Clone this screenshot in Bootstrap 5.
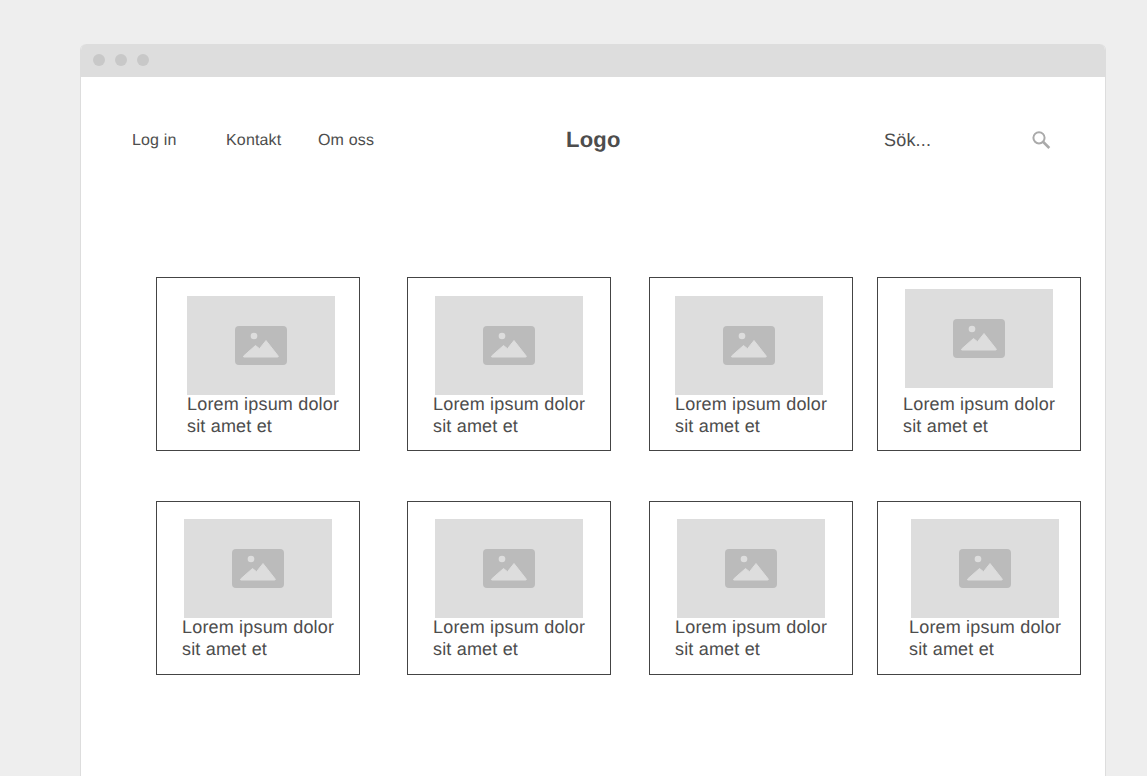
<!DOCTYPE html>
<html lang="sv">
<head>
<meta charset="utf-8">
<title>Wireframe</title>
<link rel="stylesheet" href="https://cdn.jsdelivr.net/npm/bootstrap@5.3.0/dist/css/bootstrap.min.css">
<style>
html,body{height:776px;overflow:hidden}
body{background:#eee;font-family:"Liberation Sans",Arial,sans-serif;color:#4d4d4d;text-rendering:geometricPrecision}
.stage{padding:44px 41px 0 80px;height:776px}
.frame{width:1026px;height:732px;background:#fff;border-radius:6px 6px 0 0;overflow:hidden;border:solid #ddd;border-width:0 1px}
.chrome{height:33px;background:#ddd;margin:0 -1px;padding:0 0 2px 13px;gap:10px}
.dot{width:12px;height:12px;border-radius:50%;background:#c8c8c8}
.topbar{height:126px;padding:0 0 0 51px}
.navlink{font-size:16px;color:#4d4d4d;text-decoration:none;line-height:22px;letter-spacing:.16px;margin-top:2px}
.nl-1{width:94px}.nl-2{width:92px}.nl-3{width:248px}
.logoword{font-size:22px;font-weight:700;width:318px;line-height:26px;letter-spacing:.2px}
.searchword{font-size:18px;width:147px;line-height:22px;letter-spacing:.2px}
.wall{padding:74px 0 0 75px;gap:50px}
.tile{width:204px;height:174px;border:1px solid #444;border-radius:0;background:#fff;padding-top:18px;color:#4d4d4d}
.row-low .tile{padding-top:17px}
.gap-a{margin-left:47px}.gap-b{margin-left:38px}.gap-c{margin-left:24px}
.pic{width:148px;height:99px;background:#ddd}
.pic svg{display:block}
.pic .peak{fill:#ddd;stroke:#ddd;stroke-width:1;stroke-linejoin:round}
.up{margin-top:-7px;margin-bottom:7px}
.i30{margin-left:30px}.i27{margin-left:27px}.i25{margin-left:25px}.i33{margin-left:33px}
.t30{margin-left:30px}.t25{margin-left:25px}.t31{margin-left:31px}
.caption{font-size:18px;letter-spacing:.18px;line-height:22px;margin-top:-2px;white-space:nowrap}
</style>
</head>
<body>
<div class="stage">
<div class="frame">
  <div class="chrome d-flex align-items-center"><span class="dot"></span><span class="dot"></span><span class="dot"></span></div>
  <div class="topbar d-flex align-items-center">
    <a class="navlink nl-1" href="#">Log in</a>
    <a class="navlink nl-2" href="#">Kontakt</a>
    <a class="navlink nl-3" href="#">Om oss</a>
    <div class="logoword">Logo</div>
    <div class="searchword">Sök...</div>
    <svg width="20" height="20" viewBox="0 0 20 20" fill="none" stroke="#aaa" aria-hidden="true"><circle cx="8" cy="7.800" r="5.600" stroke-width="2"/><path d="M12.300 12l6 6" stroke-width="2.600"/></svg>
  </div>
  <div class="wall d-flex flex-column">
    <div class="d-flex">
      <div class="card tile"><div class="pic i30 d-flex align-items-center justify-content-center"><svg width="52" height="40" viewBox="0 0 52 40"><rect width="52" height="39" rx="4" fill="#bbb"/><circle cx="19" cy="10" r="3.3" fill="#ddd"/><path class="peak" d="M9 31q-1 0-.4-1L20.500 19.500l4 3.200L31 14.500 43.200 30q.4 1-.5 1z"/></svg></div><div class="caption t30">Lorem ipsum dolor<br>sit amet et</div></div>
      <div class="card tile gap-a"><div class="pic i27 d-flex align-items-center justify-content-center"><svg width="52" height="40" viewBox="0 0 52 40"><rect width="52" height="39" rx="4" fill="#bbb"/><circle cx="19" cy="10" r="3.3" fill="#ddd"/><path class="peak" d="M9 31q-1 0-.4-1L20.500 19.500l4 3.200L31 14.500 43.200 30q.4 1-.5 1z"/></svg></div><div class="caption t25">Lorem ipsum dolor<br>sit amet et</div></div>
      <div class="card tile gap-b"><div class="pic i25 d-flex align-items-center justify-content-center"><svg width="52" height="40" viewBox="0 0 52 40"><rect width="52" height="39" rx="4" fill="#bbb"/><circle cx="19" cy="10" r="3.3" fill="#ddd"/><path class="peak" d="M9 31q-1 0-.4-1L20.500 19.500l4 3.200L31 14.500 43.200 30q.4 1-.5 1z"/></svg></div><div class="caption t25">Lorem ipsum dolor<br>sit amet et</div></div>
      <div class="card tile gap-c"><div class="pic i27 up d-flex align-items-center justify-content-center"><svg width="52" height="40" viewBox="0 0 52 40"><rect width="52" height="39" rx="4" fill="#bbb"/><circle cx="19" cy="10" r="3.3" fill="#ddd"/><path class="peak" d="M9 31q-1 0-.4-1L20.500 19.500l4 3.200L31 14.500 43.200 30q.4 1-.5 1z"/></svg></div><div class="caption t25">Lorem ipsum dolor<br>sit amet et</div></div>
    </div>
    <div class="d-flex row-low">
      <div class="card tile"><div class="pic i27 d-flex align-items-center justify-content-center"><svg width="52" height="40" viewBox="0 0 52 40"><rect width="52" height="39" rx="4" fill="#bbb"/><circle cx="19" cy="10" r="3.3" fill="#ddd"/><path class="peak" d="M9 31q-1 0-.4-1L20.500 19.500l4 3.200L31 14.500 43.200 30q.4 1-.5 1z"/></svg></div><div class="caption t25">Lorem ipsum dolor<br>sit amet et</div></div>
      <div class="card tile gap-a"><div class="pic i27 d-flex align-items-center justify-content-center"><svg width="52" height="40" viewBox="0 0 52 40"><rect width="52" height="39" rx="4" fill="#bbb"/><circle cx="19" cy="10" r="3.3" fill="#ddd"/><path class="peak" d="M9 31q-1 0-.4-1L20.500 19.500l4 3.200L31 14.500 43.200 30q.4 1-.5 1z"/></svg></div><div class="caption t25">Lorem ipsum dolor<br>sit amet et</div></div>
      <div class="card tile gap-b"><div class="pic i27 d-flex align-items-center justify-content-center"><svg width="52" height="40" viewBox="0 0 52 40"><rect width="52" height="39" rx="4" fill="#bbb"/><circle cx="19" cy="10" r="3.3" fill="#ddd"/><path class="peak" d="M9 31q-1 0-.4-1L20.500 19.500l4 3.200L31 14.500 43.200 30q.4 1-.5 1z"/></svg></div><div class="caption t25">Lorem ipsum dolor<br>sit amet et</div></div>
      <div class="card tile gap-c"><div class="pic i33 d-flex align-items-center justify-content-center"><svg width="52" height="40" viewBox="0 0 52 40"><rect width="52" height="39" rx="4" fill="#bbb"/><circle cx="19" cy="10" r="3.3" fill="#ddd"/><path class="peak" d="M9 31q-1 0-.4-1L20.500 19.500l4 3.200L31 14.500 43.200 30q.4 1-.5 1z"/></svg></div><div class="caption t31">Lorem ipsum dolor<br>sit amet et</div></div>
    </div>
  </div>
</div>
</div>
</body>
</html>
